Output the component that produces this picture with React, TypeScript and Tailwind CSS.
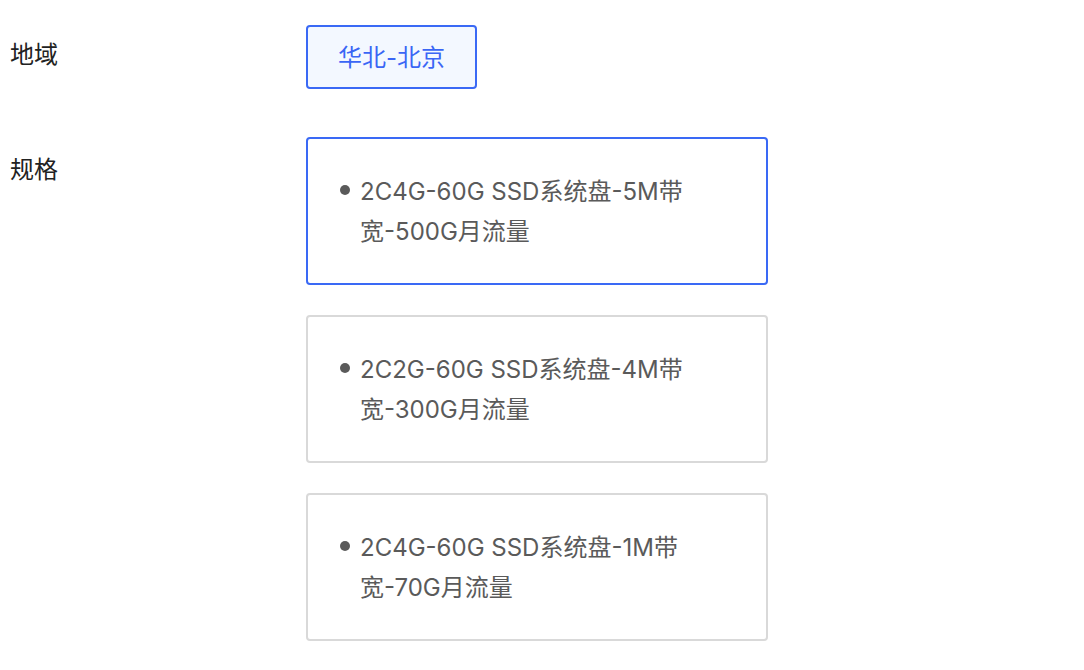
import { useState } from 'react';

const regions = ['华北-北京'];

const specs = [
  '2C4G-60G SSD系统盘-5M带宽-500G月流量',
  '2C2G-60G SSD系统盘-4M带宽-300G月流量',
  '2C4G-60G SSD系统盘-1M带宽-70G月流量',
];

export default function App() {
  const [region, setRegion] = useState(0);
  const [spec, setSpec] = useState(0);

  return (
    <main className="flex min-h-screen flex-col gap-12 bg-white pt-[25px] pl-[10px] pb-[30px] font-['Inter','Noto_Sans_CJK_SC',sans-serif] text-2xl text-[#222222]">
      <section className="flex items-start" aria-labelledby="region-label">
        <h2 id="region-label" className="w-[296px] shrink-0 pt-3 leading-9">地域</h2>
        <div className="flex flex-wrap gap-4">
          {regions.map((name, i) => (
            <button
              key={name}
              type="button"
              aria-pressed={region === i}
              onClick={() => setRegion(i)}
              className={`h-16 rounded border-2 px-[30px] pt-[2px] ${
                region === i ? 'border-[#3a69f5] bg-[#f3f8ff] text-[#3a66f5]' : 'border-[#d9d9d9] bg-white text-[#5a5a5a]'
              }`}
            >
              {name}
            </button>
          ))}
        </div>
      </section>

      <section className="flex items-start" aria-labelledby="spec-label">
        <h2 id="spec-label" className="w-[296px] shrink-0 pt-[15px] leading-9">规格</h2>
        <div className="flex w-full max-w-[462px] flex-col gap-[30px]">
          {specs.map((text, i) => (
            <button
              key={text}
              type="button"
              aria-pressed={spec === i}
              onClick={() => setSpec(i)}
              className={`flex items-start gap-[10px] rounded border-2 bg-white pt-[33px] pr-[60px] pb-[31px] pl-8 text-left leading-10 text-[#5a5a5a] ${
                spec === i ? 'border-[#3a69f5]' : 'border-[#d9d9d9]'
              }`}
            >
              <span aria-hidden="true" className="mt-[13px] size-[10px] shrink-0 rounded-full bg-[#5a5a5a]" />
              <span>{text}</span>
            </button>
          ))}
        </div>
      </section>
    </main>
  );
}
